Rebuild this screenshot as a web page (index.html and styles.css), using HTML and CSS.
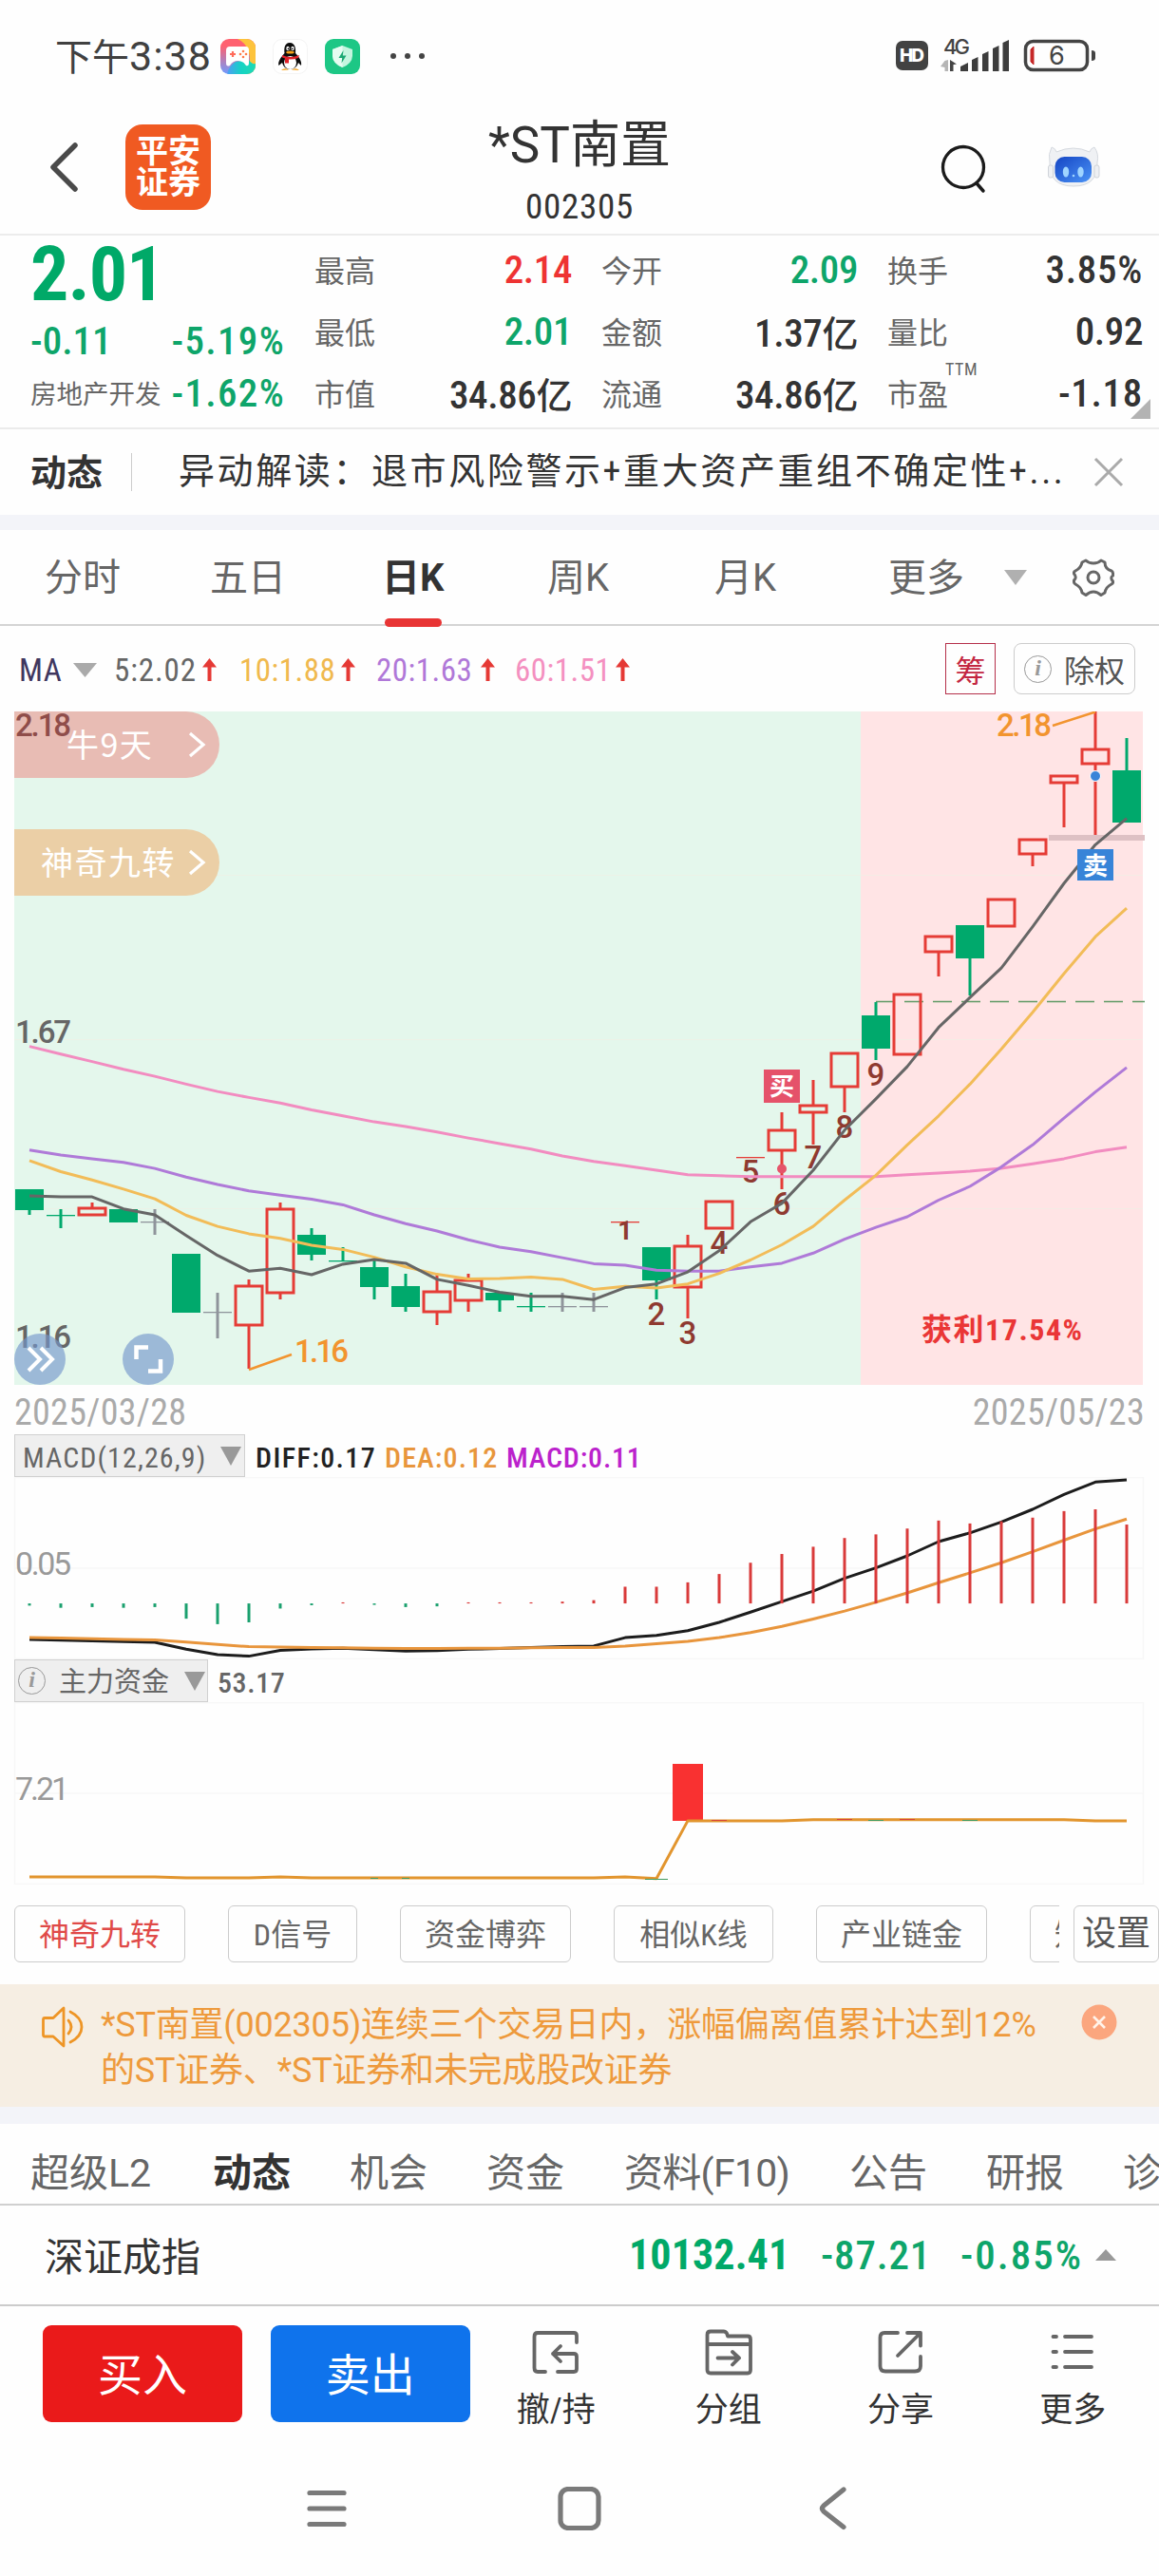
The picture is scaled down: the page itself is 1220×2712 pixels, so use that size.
FILE: index.html
```html
<!DOCTYPE html>
<html lang="zh-CN">
<head>
<meta charset="utf-8">
<title>*ST南置 002305</title>
<link rel="stylesheet" href="styles.css">
</head>
<body>
<div class="status">
  <span class="clock">下午<b>3:38</b></span>
  <svg class="app game" width="37" height="37" viewBox="0 0 37 37">
    <defs>
      <clipPath id="appClip"><rect width="37" height="37" rx="9"/></clipPath>
      <linearGradient id="gameLeft" x1="0" y1="0" x2="0" y2="1"><stop offset="0.2" stop-color="#ff6170"/><stop offset="1" stop-color="#6f9cff"/></linearGradient>
      <linearGradient id="gameBottom" x1="0" y1="0" x2="1" y2="0"><stop offset="0" stop-color="#4f9df5"/><stop offset="0.5" stop-color="#14d3c3"/><stop offset="1" stop-color="#1fd9b4"/></linearGradient>
    </defs>
    <g clip-path="url(#appClip)">
      <rect width="37" height="37" fill="url(#gameLeft)"/>
      <path d="M18 0H37V37H28Q34 20 28 9Q25 3 18 0Z" fill="#fdc33c"/>
      <path d="M7 37Q9 28 16 24L30 22Q33 27 37 26V37Z" fill="url(#gameBottom)"/>
    </g>
    <path d="M10 8H27Q30 8 30 12V25Q30 29 27 28Q24 23 18.500 23Q13 23 10 28Q6 30 6 25V12Q6 8 10 8Z" fill="#fff"/>
    <path d="M10 16H16M13 13V19" stroke="#ff6b5a" stroke-width="2.200"/>
    <g fill="#ff7a4a"><circle cx="24" cy="13" r="1.300"/><circle cx="24" cy="19" r="1.300"/><circle cx="21" cy="16" r="1.300"/><circle cx="27" cy="16" r="1.300"/></g>
  </svg>
  <svg class="app" width="37" height="37" viewBox="0 0 37 37">
    <rect x=".5" y=".5" width="36" height="36" rx="9" fill="#fff" stroke="#f4f4f4"/>
    <path d="M18 4C12 4 12 11 12.500 15C9 19 5 24 6.500 28L10 25Q12 32 18 32Q25 32 27 25L30 28C31 24 28 19 24 15C24.500 11 24 4 18 4Z" fill="#0d0d0d"/>
    <ellipse cx="18.500" cy="25" rx="6.500" ry="7" fill="#fff"/>
    <ellipse cx="16" cy="10" rx="1.700" ry="2.300" fill="#fff"/><ellipse cx="21" cy="10" rx="1.700" ry="2.300" fill="#fff"/>
    <circle cx="16.400" cy="10.400" r=".8"/><circle cx="20.600" cy="10.400" r=".8"/>
    <ellipse cx="18.500" cy="14" rx="4.300" ry="1.600" fill="#f6a11a"/>
    <path d="M10 17Q18.500 21 28 17L27 20Q22 22 17 21.500V25.500H13V20.500L10 19.500Z" fill="#e0222a"/>
    <path d="M9 33Q12 30 17 32.500ZM20 32.500Q25 30 28 33Z" fill="#f6a11a"/>
  </svg>
  <svg class="app" width="37" height="37" viewBox="0 0 37 37">
    <rect width="37" height="37" rx="9" fill="#1dc785"/>
    <path d="M18.500 7L29 11V18Q28.500 26 18.500 30Q8.500 26 8 18V11Z" fill="#c4f5df"/>
    <path d="M18.500 7V30Q8.500 26 8 18V11Z" fill="#e6fcf2"/>
    <path d="M19.500 12L14.500 20H18.200L17.500 25.500L22.500 17.500H18.800Z" fill="#1aa873"/>
  </svg>
  <svg class="dots" width="40" height="8" viewBox="0 0 40 8"><g fill="#444"><circle cx="4" cy="4" r="3"/><circle cx="19" cy="4" r="3"/><circle cx="34" cy="4" r="3"/></g></svg>
  <svg class="signals" width="220" height="40" viewBox="940 40 220 40">
    <rect x="945" y="44" width="34" height="31" rx="7" fill="#424242"/>
    <text x="949" y="66" class="hd" textLength="26">HD</text>
    <text x="995" y="58" class="net" textLength="28">4G</text>
    <path d="M1000 64V76H996.500V72L992 71L996.500 65Z" fill="#b5b5b5"/>
    <path d="M1002 64L1009 68.500L1005.500 69V76H1002Z" fill="#444"/>
    <path d="M1013 76V71L1021 67V76ZM1025 76V64L1031.500 61V76ZM1036 76V58L1042.500 55V76ZM1047 76V52L1053.500 49V76ZM1057.500 76V46L1064 43V76Z" fill="#3d3d3d"/>
    <rect x="1081.500" y="44.500" width="65" height="30" rx="8" fill="none" stroke="#444" stroke-width="3.500"/>
    <path d="M1090 50V69L1087 66V53Z" fill="#c62828" stroke="#c62828"/>
    <text x="1106" y="69" class="bat">6</text>
    <path d="M1151 54Q1155 54 1155 57V62Q1155 65 1151 65Z" fill="#444"/>
  </svg>
</div>

<header class="header">
  <svg class="back" width="36" height="60" viewBox="50 146 36 60"><path d="M79 153L56 176L79 199" fill="none" stroke="#4a4a4a" stroke-width="5.500" stroke-linecap="round" stroke-linejoin="round"/></svg>
  <div class="logo"><span>平安</span><span>证券</span></div>
  <div class="title"><h1>*ST南置</h1><p>002305</p></div>
  <svg class="search" width="52" height="56" viewBox="988 150 52 56"><circle cx="1014" cy="176" r="21.500" fill="none" stroke="#1b1b1b" stroke-width="3.300"/><path d="M1028 193L1035 201" stroke="#1b1b1b" stroke-width="3.500" stroke-linecap="round"/></svg>
  <svg class="robot" width="56" height="46" viewBox="1102 152 56 46">
    <defs><linearGradient id="face" x1="0" y1="0" x2="1" y2="1"><stop offset="0" stop-color="#1445c4"/><stop offset="1" stop-color="#4b93f6"/></linearGradient></defs>
    <path d="M1107 155Q1111 156 1112 160Q1130 152 1147 160Q1148 156 1152 155Q1157 162 1155 171Q1156 196 1130 196Q1104 196 1105 171Q1103 162 1107 155Z" fill="#eff1f4" stroke="#d5d9df"/>
    <rect x="1103.500" y="174" width="5" height="13" rx="2" fill="#eef0f3" stroke="#cfd3d9"/><rect x="1152" y="174" width="5" height="13" rx="2" fill="#eef0f3" stroke="#cfd3d9"/>
    <rect x="1110.500" y="165" width="38.500" height="27" rx="10" fill="url(#face)"/>
    <ellipse cx="1122" cy="181" rx="3.200" ry="5.500" fill="#9fd4ff"/><ellipse cx="1137.500" cy="181" rx="3.200" ry="5.500" fill="#9fd4ff"/><circle cx="1130" cy="185" r="1.300" fill="#9fd4ff"/>
  </svg>
</header>

<section class="quote">
  <div class="last">
    <div class="price">2.01</div>
    <div class="change green"><span class="tight">-0.11</span><span>-5.19%</span></div>
    <div class="sector green"><label>房地产开发</label><span>-1.62%</span></div>
  </div>
  <dl>
    <div><dt>最高</dt><dd class="red">2.14</dd></div>
    <div><dt>最低</dt><dd class="green">2.01</dd></div>
    <div><dt>市值</dt><dd>34.86<i>亿</i></dd></div>
  </dl>
  <dl>
    <div><dt>今开</dt><dd class="green">2.09</dd></div>
    <div><dt>金额</dt><dd>1.37<i>亿</i></dd></div>
    <div><dt>流通</dt><dd>34.86<i>亿</i></dd></div>
  </dl>
  <dl>
    <div><dt>换手</dt><dd class="loose">3.85%</dd></div>
    <div><dt>量比</dt><dd>0.92</dd></div>
    <div><dt>市盈<sup>TTM</sup></dt><dd class="loose">-1.18</dd></div>
  </dl>
  <svg class="expand" width="21" height="21" viewBox="0 0 21 21"><path d="M21 0V21H0Z" fill="#b3b3b3"/></svg>
</section>

<section class="news">
  <b>动态</b>
  <p>异动解读：退市风险警示+重大资产重组不确定性+...</p>
  <svg width="32" height="32" viewBox="0 0 32 32"><path d="M2 2L30 30M30 2L2 30" stroke="#aaa" stroke-width="3"/></svg>
</section>

<nav class="periods">
  <span>分时</span><span>五日</span><span class="on">日K</span><span>周K</span><span>月K</span><span>更多</span>
  <svg width="24" height="16" viewBox="0 0 24 16"><path d="M0 0H24L12 16Z" fill="#b0b0b0"/></svg>
  <svg width="44" height="44" viewBox="0 0 44 44" fill="none" stroke="#666" stroke-width="3" stroke-linejoin="round"><path d="M14 4Q17 7 22 7Q27 7 30 4L34 6Q34 13 41 15Q43 16 42.500 20Q39 22 42.500 26Q43 28 41 29Q35 32 34 38L30 40.500Q26 37 22 37Q18 37 14 40.500L10 38Q9 32 3 29Q1 28 1.500 25Q5 22 1.500 18Q1 16 3 15Q9 12 10 6Z"/><circle cx="22" cy="22" r="6"/></svg>
</nav>

<section class="ma">
  <span class="name">MA</span>
  <svg width="25" height="15" viewBox="0 0 25 15"><path d="M0 0H25L12.500 15Z" fill="#aaa"/></svg>
  <span class="m5">5:2.02</span><svg class="up" width="15" height="24" viewBox="0 0 15 24"><path d="M7.500 0L15 9.500H9.500V24H5.500V9.500H0Z"/></svg>
  <span class="m10">10:1.88</span><svg class="up" width="15" height="24" viewBox="0 0 15 24"><path d="M7.500 0L15 9.500H9.500V24H5.500V9.500H0Z"/></svg>
  <span class="m20">20:1.63</span><svg class="up" width="15" height="24" viewBox="0 0 15 24"><path d="M7.500 0L15 9.500H9.500V24H5.500V9.500H0Z"/></svg>
  <span class="m60">60:1.51</span><svg class="up" width="15" height="24" viewBox="0 0 15 24"><path d="M7.500 0L15 9.500H9.500V24H5.500V9.500H0Z"/></svg>
  <span class="chip-btn">筹</span>
  <span class="right-btn"><i class="info">i</i>除权</span>
</section>

<section class="price-chart">
  <svg id="kline" width="1220" height="709" viewBox="0 749 1220 709">
    <rect x="15" y="749" width="891" height="709" fill="#e4f7ec"/>
    <rect x="906" y="749" width="297" height="709" fill="#ffe4e5"/>
    <path d="M15 921.500H1203M15 1094.500H1203M15 1272.500H1203" stroke="#f0efe6" stroke-opacity=".7"/>
    <rect x="1104" y="879" width="101" height="6" fill="#dec1c4"/>
    <path d="M922 1054.500H1205" stroke="#609a66" stroke-width="1.500" stroke-dasharray="20 10"/>
    <g id="candles"></g>
    <g class="counts">
      <text x="658" y="1305" class="first">1</text><text x="691" y="1395">2</text><text x="724" y="1415">3</text><text x="757" y="1320">4</text><text x="790" y="1245">5</text><text x="823" y="1279">6</text><text x="856" y="1230">7</text><text x="889" y="1198">8</text><text x="922" y="1143">9</text>
    </g>
    <g id="averages"></g>
    <circle cx="823" cy="1230.500" r="5" fill="#e5546a"/>
    <circle cx="1153" cy="817" r="5.500" fill="#3a84d8" stroke="#fff" stroke-width="1"/>
    <rect x="804" y="1126" width="38" height="35" fill="#e5526a"/><text x="823" y="1153" class="mark">买</text>
    <rect x="1134" y="894" width="38" height="33" fill="#3784d8"/><text x="1153" y="920.500" class="mark">卖</text>
    <path d="M262 1442L307 1426M1108 764L1153 749.500" stroke="#f2942f" stroke-width="2.500"/>
    <text x="310" y="1434" class="extreme" textLength="57">1.16</text>
    <text x="1049" y="775" class="extreme" textLength="58">2.18</text>
    <text x="970" y="1411" class="profit" textLength="169">获利17.54%</text>
    <text x="16" y="1098" class="axis" textLength="59">1.67</text>
  </svg>
  <div class="pill bull">牛9天</div>
  <div class="pill nine">神奇九转</div>
  <svg class="overlay" width="235" height="709" viewBox="0 749 235 709">
    <path d="M200 772L214 784L200 796M200 896L214 908L200 920" fill="none" stroke="#fff" stroke-width="3.200"/>
    <text x="16" y="775" class="axis top" textLength="59">2.18</text>
    <text x="16" y="1419" class="axis" textLength="59">1.16</text>
    <circle cx="42" cy="1431" r="27" fill="#7396cb" fill-opacity=".64"/><circle cx="156" cy="1431" r="27" fill="#7396cb" fill-opacity=".64"/>
    <path d="M30 1419L42 1431L30 1443M43 1419L55 1431L43 1443" fill="none" stroke="#fff" stroke-width="4"/>
    <path d="M143.500 1431V1418.500H156M169 1431V1443.500H156" fill="none" stroke="#fff" stroke-width="4.500"/>
  </svg>
</section>
<div class="dates"><span>2025/03/28</span><span>2025/05/23</span></div>

<div class="ind-head macd-head">
  <div class="select"><span>MACD(12,26,9)</span><svg width="22" height="20" viewBox="0 0 22 20"><path d="M0 0H22L11 20Z" fill="#999"/></svg></div>
  <span class="diff">DIFF:0.17</span><span class="dea">DEA:0.12</span><span class="macd">MACD:0.11</span>
</div>
<svg id="macd" class="sub" width="1220" height="192" viewBox="0 1555 1220 192">
  <path d="M15.500 1555.500H1203.500V1746.500H15.500ZM15.500 1651H1203.500" fill="none" stroke="#f7f7f7" stroke-width="1.500"/>
  <text x="16" y="1658" class="axis light" textLength="59">0.05</text>
</svg>

<div class="ind-head fund-head">
  <div class="select"><i class="info">i</i><span>主力资金</span><svg width="22" height="20" viewBox="0 0 22 20"><path d="M0 0H22L11 20Z" fill="#999"/></svg></div>
  <span class="fund">53.17</span>
</div>
<svg id="fund" class="sub" width="1220" height="192" viewBox="0 1792 1220 192">
  <path d="M15.500 1792.500H1203.500V1983.500H15.500ZM15.500 1888H1203.500" fill="none" stroke="#f7f7f7" stroke-width="1.500"/>
  <text x="16" y="1895" class="axis light" textLength="57">7.21</text>
  <rect x="708" y="1857" width="32" height="60" fill="#f93131"/>
</svg>

<section class="filters">
  <div class="scroller"><span class="on w180">神奇九转</span><span class="w136">D信号</span><span class="w180">资金博弈</span><span class="w168">相似K线</span><span class="w180">产业链金</span><span class="w180">知识图谱</span></div>
  <span class="setting">设置</span>
</section>

<section class="notice">
  <svg width="44" height="44" viewBox="0 0 44 44" fill="none" stroke="#ee9526" stroke-width="2.800" stroke-linejoin="round" stroke-linecap="round"><path d="M3 12.500H12L23 2V42L12 32H3Q1.500 32 1.500 30V14.500Q1.500 12.500 3 12.500Z"/><path d="M28 15Q34 22 28 29M30 6Q42 12 42 22Q42 32 30 38"/></svg>
  <p>*ST南置(002305)连续三个交易日内，涨幅偏离值累计达到12%<br>的ST证券、*ST证券和未完成股改证券</p>
  <svg class="close" width="38" height="38" viewBox="0 0 38 38"><circle cx="19" cy="19" r="18.500" fill="#fba67e"/><path d="M13 13L25 25M25 13L13 25" stroke="#fff3ea" stroke-width="2.600"/></svg>
</section>

<nav class="topics"><span>超级L2</span><span class="on">动态</span><span>机会</span><span>资金</span><span class="f10">资料(F10)</span><span>公告</span><span>研报</span><span>诊</span></nav>

<section class="index">
  <span>深证成指</span><b>10132.41</b><em>-87.21</em><em class="pct">-0.85%</em>
  <svg width="22" height="12" viewBox="0 0 22 12"><path d="M0 12L11 0L22 12Z" fill="#999"/></svg>
</section>

<section class="actions">
  <button class="buy">买入</button>
  <button class="sell">卖出</button>
  <div class="act"><svg width="52" height="50" viewBox="560 2452 52 50"><path d="M608 2466V2459Q608 2456 605 2456H567Q563.500 2456 563.500 2460V2493Q563.500 2497 567 2497H575M588 2497H605Q608 2497 608 2494V2481Q608 2478 605 2478H583M591 2470L583 2478L591 2486"/></svg><span>撤/持</span></div>
  <div class="act"><svg width="52" height="50" viewBox="741 2452 52 50"><path d="M744.500 2458Q744.500 2454.500 748 2454.500H762Q765 2454.500 766 2459.500H787Q790 2459.500 790 2463V2495Q790 2498.500 787 2498.500H748Q744.500 2498.500 744.500 2495ZM744.500 2468H790M755.500 2482.500H778M771 2476L778 2482.500L771 2489.500"/></svg><span>分组</span></div>
  <div class="act"><svg width="52" height="50" viewBox="921 2452 52 50"><path d="M944 2456H930Q925.500 2456 925.500 2461V2491Q925.500 2496.500 931 2496.500H962Q968 2496.500 968 2491V2481M954 2456H968V2469.500M967 2457L944 2480"/></svg><span>分享</span></div>
  <div class="act"><svg width="52" height="50" viewBox="1104 2452 52 50"><path d="M1109.500 2460H1113M1122 2460H1150M1109.500 2476H1113M1122 2476H1150M1109.500 2492H1113M1122 2492H1150"/></svg><span>更多</span></div>
</section>

<nav class="system">
  <svg width="46" height="46" viewBox="321 2619 46 46"><path d="M326 2625.500H362M326 2642H362M326 2658.500H362"/></svg>
  <svg width="46" height="46" viewBox="587 2619 46 46"><rect x="590" y="2621.500" width="40" height="41" rx="8"/></svg>
  <svg width="46" height="46" viewBox="853 2619 46 46"><path d="M888 2622L867 2639Q864 2642 867 2645L888 2661.500"/></svg>
</nav>
<script src="chart.js"></script>
</body>
</html>
```
FILE: styles.css
```css
* { box-sizing: border-box; margin: 0; padding: 0; }
html, body { width: 1220px; background: #fefefe; }
body {
  height: 2712px;
  overflow: hidden;
  font-family: Roboto, "Noto Sans CJK SC", sans-serif;
  font-stretch: 75%;
  color: #333;
}
i, em { font-style: normal; }
svg { display: block; flex: none; }
.green { color: #0ea56a; }
.red { color: #ee3333; }

.status { display: flex; align-items: center; height: 112px; padding: 6px 0 0 58px; }
.clock { width: 174px; font: 400 39px/1 "Noto Sans CJK SC", sans-serif; color: #404040; white-space: nowrap; }
.clock b { font: 400 43px/1 Roboto, sans-serif; letter-spacing: 1px; }
.app { margin-right: 18px; }
.dots { margin-left: 13px; }
.signals { margin-left: 488px; }
.hd { font: 800 19px Inter, sans-serif; fill: #fff; }
.net { font: 500 22px Inter, sans-serif; fill: #444; }
.bat { font: 400 27px Inter, sans-serif; fill: #444; }

.header { display: grid; grid-template-columns: 82px 90px 720px 104px 56px; padding-left: 50px; height: 136px; border-bottom: 2px solid #ececec; align-items: start; }
.back { margin-top: 34px; }
.logo { display: flex; flex-direction: column; align-items: center; justify-content: center; height: 90px; margin-top: 19px; border-radius: 18px; background: #f05a22; color: #fff; font-size: 34px; font-weight: 700; line-height: 33px; }
.title { text-align: center; margin-left: 52px; width: 672px; }
.title h1 { font-size: 53px; font-weight: 400; font-stretch: 100%; line-height: 82px; }
.title p { font-size: 37px; line-height: 48px; letter-spacing: .7px; }
.search { margin: 38px 0 0 46px; }
.robot { margin: 40px 0 0 56px; }

.quote { position: relative; display: grid; grid-template-columns: 268px 271px 270px 269px; column-gap: 31px; padding: 4px 0 0 32px; height: 204px; border-bottom: 2px solid #ebebeb; }
.price { height: 75px; font-size: 80px; line-height: 74px; font-weight: 700; color: #00a968; letter-spacing: -1px; }
.change, .sector { display: flex; justify-content: space-between; align-items: center; height: 64px; font-size: 41px; font-weight: 500; letter-spacing: 1.300px; }
.change .tight { letter-spacing: 0; }
.sector { height: 46px; }
.sector label { margin-top: -3px; font-size: 27.500px; color: #666; font-weight: 400; letter-spacing: 0; }
.quote dl div { display: flex; justify-content: space-between; align-items: center; height: 65px; }
.quote dt { position: relative; margin-top: -4px; font-size: 32px; color: #666; }
.quote dd { font-size: 41px; font-weight: 500; letter-spacing: -.400px; line-height: 65px; }
.quote dd.loose { letter-spacing: .7px; }
.quote dd i { font-size: 38px; font-weight: 500; font-family: "Noto Sans CJK SC"; }
.quote sup { position: absolute; left: 61px; top: -11px; font-size: 18px; line-height: 20px; letter-spacing: .5px; }
.expand { position: absolute; right: 9px; bottom: 9px; }

.news { display: grid; grid-template-columns: 106px 1013px 32px; align-items: center; padding-left: 32px; height: 106px; border-bottom: 16px solid #f3f4f9; }
.news b { margin-top: -5px; font-size: 38px; }
.news p { height: 40px; line-height: 38px; padding-left: 49px; border-left: 1px solid #ccc; font-size: 38px; letter-spacing: 2.600px; white-space: nowrap; }

.periods { display: grid; grid-template-columns: 174px 184px 171px 176px 183px 122px 72px 44px; align-items: center; padding-left: 47px; height: 101px; border-bottom: 2px solid #d4d4d4; font-size: 40px; font-stretch: 100%; color: #666; }
.periods span { margin-top: -5px; }
.periods .on { position: relative; left: -3px; width: 68px; color: #333; font-weight: 700; }
.periods .on::after { content: ""; position: absolute; left: 3px; bottom: -26px; width: 60px; height: 9px; border-radius: 4.500px; background: #e83434; }

.ma { display: grid; grid-template-columns: 57px 43px 93px 39px 107px 37px 110px 36px 106px 347px 72px 128px; align-items: center; padding-left: 20px; height: 92px; margin-bottom: -2px; font-size: 33px; font-weight: 450; letter-spacing: .500px; }
.ma .name { color: #40375f; font-weight: 400; }
.m5 { color: #666; letter-spacing: .9px; } .m10 { color: #f0b94e; } .m20 { color: #b078d8; } .m60 { color: #f490c0; }
.up { fill: #e53935; }
.chip-btn, .right-btn { display: flex; align-items: center; justify-content: center; height: 54px; width: 53px; border: 1.500px solid #b5304a; color: #c32641; font-size: 32px; font-weight: 400; letter-spacing: 0; margin-top: -2px; }
.right-btn { width: 128px; border: 1.500px solid #ccc; border-radius: 8px; color: #555; gap: 13px; }
.info { display: inline-block; width: 29px; height: 29px; border: 1.500px solid #999; border-radius: 50%; font: italic 700 24px/25px "Liberation Serif", serif; color: #999; text-align: center; }

.price-chart { position: relative; height: 709px; }
.axis, .extreme, .counts { font-size: 33px; font-weight: 500; font-stretch: 100%; }
.axis { fill: #666; }
.axis.top { fill: #8f4d4a; }
.axis.light { fill: #999; font-size: 34px; font-weight: 400; }
.extreme { fill: #f2942f; }
.counts { fill: #8f3a30; text-anchor: middle; }
.counts .first { font-weight: 700; font-size: 27px; }
.mark { fill: #fff; font-size: 26px; font-weight: 700; text-anchor: middle; }
.profit { fill: #ea3636; font-size: 32px; font-weight: 700; }
.pill { position: absolute; left: 15px; width: 216px; height: 70px; border-radius: 0 35px 35px 0; color: #fff; font: 400 34px/68px "Noto Sans CJK SC"; letter-spacing: 1.500px; }
.bull { top: 0; background: #e8bcb4; padding-left: 55px; }
.nine { top: 124px; background: #ebcfa6; padding-left: 28px; }
.overlay { position: absolute; left: 0; top: 0; }
.dates { display: flex; justify-content: space-between; height: 52px; padding: 5px 15px 0 15px; font-size: 38px; line-height: 49px; color: #aaa; letter-spacing: .3px; }

.ind-head { display: flex; align-items: center; height: 45px; padding-left: 15px; font-size: 30px; font-weight: 500; line-height: 49px; white-space: nowrap; }
.select { display: flex; align-items: center; height: 45px; border: 1.500px solid #d0d0d0; background: #efefef; color: #666; font-weight: 400; }
.ind-head > span, .select span { padding-top: 3px; }
.macd-head .select { width: 243px; padding-left: 8px; justify-content: space-between; padding-right: 3px; margin-right: 11px; letter-spacing: 1.100px; }
.fund-head .select { width: 204px; padding-left: 3px; margin-right: 10px; }
.fund-head .select span { width: 132px; margin-left: 14px; font-size: 29px; }
.diff, .dea, .macd { letter-spacing: 1.400px; width: 136px; color: #222; }
.dea { color: #e8963c; width: 128px; letter-spacing: 1.100px; }
.macd { color: #bb22cc; letter-spacing: .8px; }
.fund { color: #666; letter-spacing: .6px; }

.filters { display: flex; height: 105px; padding-top: 22px; font-size: 32px; color: #666; }
.scroller { display: flex; gap: 45px; width: 1115px; padding-left: 15px; margin-right: 15px; overflow: hidden; }
.filters span { flex: none; height: 60px; line-height: 60px; text-align: center; border: 1.500px solid #ccc; border-radius: 6px; }
.filters .on { color: #e04a48; }
.w180 { width: 180px; } .w136 { width: 136px; } .w168 { width: 168px; }
.filters .setting { width: 90px; font-size: 36px; line-height: 58px; color: #555; }

.notice { display: grid; grid-template-columns: 62px 1032px 38px; align-items: start; height: 147px; padding: 19px 0 0 44px; background: #f6eee3; border-bottom: 18px solid #f3f4f9; color: #ee9a3c; }
.notice svg { margin-top: 4px; }
.notice .close { margin-top: 2px; }
.notice p { font-size: 36px; font-stretch: 100%; line-height: 48px; white-space: nowrap; letter-spacing: -.2px; }

.topics { display: grid; grid-template-columns: 192px 144px 144px 145px 237px 144px 144px 38px; align-items: center; height: 86px; padding: 11px 0 0 32px; border-bottom: 2px solid #d0d0d0; font-size: 41px; font-stretch: 100%; color: #666; white-space: nowrap; overflow: hidden; }
.topics .on { font-weight: 700; color: #333; }
.topics .f10 { letter-spacing: -.7px; }

.index { display: grid; grid-template-columns: 615px 202px 147px 142px 22px; align-items: center; height: 106px; padding-left: 47px; border-bottom: 2px solid #ccc; font-size: 41px; }
.index span { margin-top: -3px; }
.index b { font-size: 44px; color: #00a968; letter-spacing: .1px; }
.index em { font-size: 43px; color: #0ea56a; font-weight: 500; letter-spacing: .8px; }
.index .pct { letter-spacing: 2px; }

.actions { display: flex; height: 140px; padding: 20px 0 0 45px; }
.actions button { width: 210px; height: 102px; margin-right: 30px; border: 0; border-radius: 9px; background: #ea1a1a; color: #fff; font: 400 47px/98px "Noto Sans CJK SC"; padding-bottom: 4px; }
.actions .sell { background: #0f73ec; margin-right: 0; }
.act { display: flex; flex-direction: column; align-items: center; width: 181.500px; padding-top: 4px; gap: 12px; font-size: 35px; line-height: 48px; }
.act svg { fill: none; stroke: #666; stroke-width: 3.800; stroke-linecap: round; stroke-linejoin: round; }
.system { display: flex; justify-content: center; gap: 220px; padding-top: 50px; }
.system svg { fill: none; stroke: #7a7a7a; stroke-width: 5.200; stroke-linecap: round; stroke-linejoin: round; }
```
FILE: chart.js
```js
const NS = 'http://www.w3.org/2000/svg';
const STEP = 33;
const X0 = 31;
const x = i => X0 + STEP * i;

function add(parent, tag, attrs) {
  const node = document.createElementNS(NS, tag);
  for (const key in attrs) node.setAttribute(key, attrs[key]);
  parent.appendChild(node);
  return node;
}

function line(parent, values, toY, color, width) {
  const d = values.map((v, i) => (i ? 'L' : 'M') + x(i) + ' ' + toY(v).toFixed(1)).join('');
  return add(parent, 'path', { d, fill: 'none', stroke: color, 'stroke-width': width, 'stroke-linejoin': 'round' });
}

// [kind, body top, body bottom, high, low]; r = rise, g = fall, n = flat
const days = [
  ['g', 1252, 1274, 1252, 1279], ['g', 1279, 1280, 1273, 1293], ['r', 1272, 1279, 1266, 1279], ['g', 1273, 1287, 1273, 1287],
  ['n', 1286, 1287, 1273, 1300], ['g', 1320, 1382, 1320, 1382], ['n', 1381, 1382, 1361, 1409], ['r', 1354, 1395, 1347, 1441],
  ['r', 1273, 1361, 1266, 1368], ['g', 1300, 1321, 1293, 1327], ['g', 1327, 1328, 1313, 1328], ['g', 1334, 1355, 1327, 1368],
  ['g', 1354, 1376, 1341, 1381], ['r', 1360, 1381, 1341, 1395], ['r', 1348, 1369, 1341, 1381], ['g', 1361, 1369, 1361, 1381],
  ['g', 1375, 1376, 1361, 1381], ['n', 1375, 1376, 1361, 1381], ['n', 1375, 1376, 1361, 1381], ['r', 1286, 1287, 1286, 1287],
  ['g', 1313, 1348, 1313, 1368], ['r', 1312, 1355, 1300, 1388], ['r', 1265, 1293, 1265, 1293], ['r', 1218, 1219, 1218, 1219],
  ['r', 1190, 1211, 1171, 1252], ['r', 1164, 1171, 1137, 1205], ['r', 1109, 1144, 1109, 1171], ['g', 1069, 1104, 1055, 1116],
  ['r', 1047, 1110, 1047, 1110], ['r', 986, 1002, 986, 1028], ['g', 974, 1009, 974, 1048], ['r', 947, 975, 947, 975],
  ['r', 884, 899, 884, 912], ['r', 817, 824, 817, 871], ['r', 789, 804, 749, 879], ['g', 811, 866, 777, 866]
];
const ink = { r: '#e53c36', g: '#00a96c', n: '#8f949b' };
const candles = document.getElementById('candles');
days.forEach(([kind, top, bottom, high, low], i) => {
  const color = ink[kind];
  const flat = bottom - top <= 1;
  if (high < top) add(candles, 'path', { d: `M${x(i)} ${high}V${top}`, stroke: color, 'stroke-width': 3 });
  if (low > bottom) add(candles, 'path', { d: `M${x(i)} ${bottom}V${low}`, stroke: color, 'stroke-width': 3 });
  if (flat) add(candles, 'rect', { x: x(i) - 15, y: top, width: 30, height: 1.3, fill: color });
  else if (kind === 'r') add(candles, 'rect', { x: x(i) - 14, y: top, width: 28, height: bottom - top, fill: 'none', stroke: color, 'stroke-width': 3 });
  else add(candles, 'rect', { x: x(i) - 15, y: top, width: 30, height: bottom - top, fill: color });
});

const priceY = v => 740 + v / 2.063;
const averages = document.getElementById('averages');
line(averages, [746,763,779,796,811,828,844,857,869,884,897,910,920,932,945,957,969,984,996,1005,1015,1025,1027,1029,1029,1029,1029,1029,1025,1021,1017,1011,1001,990,975,965], priceY, '#f28cc0', 3);
line(averages, [971,982,990,998,1011,1030,1046,1060,1069,1078,1090,1112,1131,1147,1166,1182,1192,1205,1218,1221,1232,1234,1234,1225,1217,1195,1165,1139,1116,1080,1050,1008,960,902,845,792], priceY, '#af7ad8', 3);
line(averages, [994,1018,1036,1056,1077,1113,1137,1153,1163,1178,1187,1204,1225,1241,1251,1250,1247,1252,1274,1267,1271,1262,1239,1210,1177,1137,1080,1026,960,897,828,752,672,588,508,446], priceY, '#f2bc58', 3);
line(averages, [1071,1073,1073,1099,1112,1157,1200,1234,1228,1242,1219,1209,1217,1252,1265,1280,1289,1289,1296,1270,1262,1236,1190,1127,1087,1015,928,860,790,705,640,576,486,392,308,251], priceY, '#666', 3);

const subY = v => 1460 + v / 2.613;
const macd = document.getElementById('macd');
line(macd, [695,697,699,701,703,722,737,741,725,721,719,723,727,726,722,720,717,715,713,690,684,671,648,620,591,562,527,498,465,426,402,372,337,296,262,256], subY, '#1c1c1c', 3);
line(macd, [690,691,693,695,696,702,709,715,716,717,718,719,720,720,719,719,718,717,717,713,707,700,690,676,659,639,617,593,567,539,512,484,454,422,391,364], subY, '#e8953c', 3);
const zero = 596;
[602,608,606,608,606,638,653,648,610,601,593,600,606,604,593,593,593,591,587,550,550,538,515,484,460,440,416,406,390,368,376,370,360,342,337,379].forEach((v, i) => {
  add(macd, 'path', { d: `M${x(i)} ${subY(zero)}V${subY(v)}`, stroke: v < zero ? '#d93a3a' : '#1aa06e', 'stroke-width': 3 });
});

const fund = document.getElementById('fund');
line(fund, [1348,1348,1348,1348,1348,1351,1351,1351,1348,1351,1351,1351,1351,1351,1351,1351,1351,1351,1351,1348,1353,1194,1194,1194,1194,1191,1191,1191,1191,1191,1191,1191,1191,1191,1194,1194], subY, '#e2952e', 3);
add(fund, 'path', { d: 'M390 1977.500H398M423 1977.500H431M679 1978.500H703M914 1916.500H930M1013 1916.500H1029', stroke: '#3f9a5c', 'stroke-width': 1 });
add(fund, 'path', { d: 'M749 1916.500H765M881 1915.500H897M947 1915.500H963', stroke: '#d8453a', 'stroke-width': 1 });
```
